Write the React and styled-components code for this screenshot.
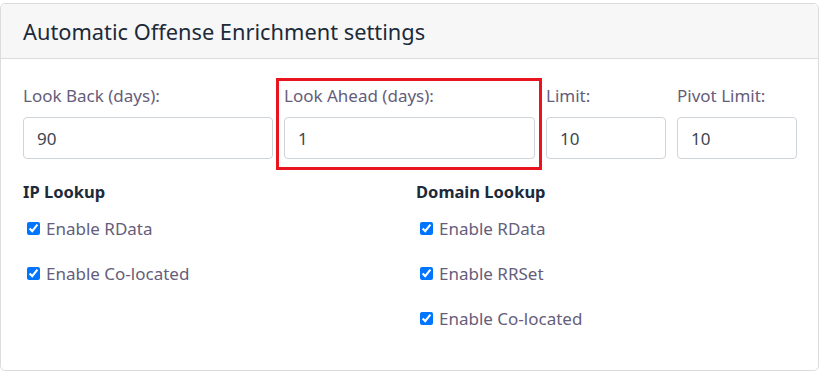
import React from "react";
import styled, { createGlobalStyle } from "styled-components";

const Global = createGlobalStyle`
  html, body { margin: 0; padding: 0; background: #fff; }
  body { font-family: "Noto Sans", "Open Sans", sans-serif; }
`;

const Card = styled.section`
  margin-top: 3px;
  width: 817px;
  height: 366px;
  border: 1px solid #dcdcdc;
  border-radius: 5px;
  background: #fff;
  overflow: hidden;
`;

const Header = styled.header`
  height: 54px;
  display: flex;
  align-items: center;
  padding: 0 22px;
  background: #f7f7f7;
  border-bottom: 1px solid #dcdcdc;
`;

const Title = styled.h2`
  margin: 0;
  font-size: 21.8px;
  font-weight: 400;
  color: #1c2a3a;
`;

const Body = styled.div`
  padding: 25px 21px 0 22px;
`;

const FieldRow = styled.div`
  display: grid;
  grid-template-columns: 250px 251px 120px 120px;
  column-gap: 11px;
`;

const Field = styled.div`
  position: relative;
  display: flex;
  flex-direction: column;
  ${(p) =>
    p.$highlight &&
    `
    &::after {
      content: "";
      position: absolute;
      left: -8px;
      right: -7px;
      top: -6px;
      bottom: -11px;
      border: 3px solid #e8141e;
      pointer-events: none;
    }
  `}
`;

const Label = styled.label`
  font-size: 17px;
  line-height: 24px;
  color: #655d7a;
  margin-bottom: 9px;
  white-space: nowrap;
`;

const Input = styled.input`
  box-sizing: border-box;
  width: 100%;
  height: 42px;
  padding: 0 13px;
  font-family: inherit;
  font-size: 17px;
  color: #3d4650;
  border: 1px solid #ced4da;
  border-radius: 4px;
  background: #fff;
  outline: none;
`;

const Lookups = styled.div`
  display: grid;
  grid-template-columns: 393px 1fr;
  margin-top: 21px;
`;

const Group = styled.div`
  display: flex;
  flex-direction: column;
`;

const GroupTitle = styled.h3`
  margin: 0 0 12px;
  font-size: 16.5px;
  line-height: 24px;
  font-weight: 700;
  color: #1c2a3a;
`;

const Check = styled.label`
  display: flex;
  align-items: center;
  height: 24px;
  margin-bottom: 21px;
  font-size: 17px;
  color: #655d7a;
`;

const Box = styled.input`
  width: 13px;
  height: 13px;
  margin: 0 6px 0 4px;
  accent-color: #0075ff;
`;

const fields = [
  { label: "Look Back (days):", value: "90" },
  { label: "Look Ahead (days):", value: "1", highlight: true },
  { label: "Limit:", value: "10" },
  { label: "Pivot Limit:", value: "10" },
];

const groups = [
  { title: "IP Lookup", items: ["Enable RData", "Enable Co-located"] },
  { title: "Domain Lookup", items: ["Enable RData", "Enable RRSet", "Enable Co-located"] },
];

export default function App() {
  return (
    <>
      <Global />
      <Card>
        <Header>
          <Title>Automatic Offense Enrichment settings</Title>
        </Header>
        <Body>
          <FieldRow>
            {fields.map((f) => (
              <Field key={f.label} $highlight={f.highlight}>
                <Label>{f.label}</Label>
                <Input defaultValue={f.value} />
              </Field>
            ))}
          </FieldRow>
          <Lookups>
            {groups.map((g) => (
              <Group key={g.title}>
                <GroupTitle>{g.title}</GroupTitle>
                {g.items.map((it) => (
                  <Check key={it}>
                    <Box type="checkbox" defaultChecked />
                    {it}
                  </Check>
                ))}
              </Group>
            ))}
          </Lookups>
        </Body>
      </Card>
    </>
  );
}
